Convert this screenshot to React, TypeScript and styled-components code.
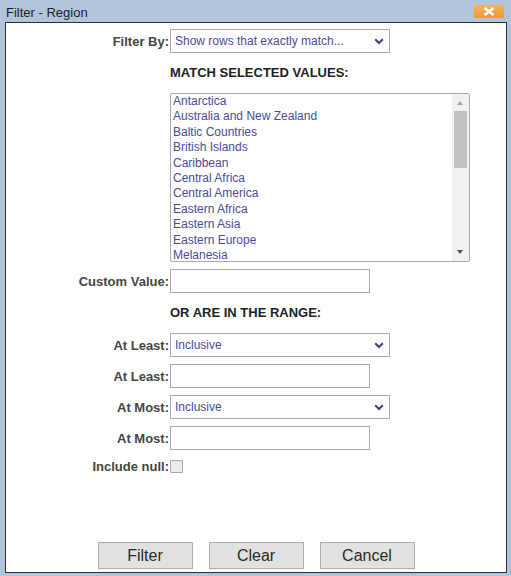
import { createGlobalStyle } from "styled-components";
import styled from "styled-components";

const GlobalStyle = createGlobalStyle`
  html, body {
    margin: 0;
    padding: 0;
    background: #b2c4da;
  }
  body {
    font-family: "Liberation Sans", Arial, sans-serif;
  }
`;

const Window = styled.div`
  display: flex;
  flex-direction: column;
  width: 511px;
  height: 576px;
  box-sizing: border-box;
  padding: 0 4px 3px 5px;
  background: #b2c4da;
`;

const TitleBar = styled.div`
  display: flex;
  align-items: center;
  justify-content: space-between;
  height: 22px;
  box-sizing: border-box;
  padding: 3px 3px 0 1px;
`;

const Title = styled.span`
  font-size: 13px;
  color: #1e1e1e;
`;

const CloseButton = styled.button`
  display: flex;
  align-items: center;
  justify-content: center;
  width: 30px;
  height: 13px;
  padding: 0;
  margin-top: -3px;
  border: none;
  background: linear-gradient(#f7b257, #f09a2c);
`;

const Panel = styled.div`
  flex: 1;
  display: flex;
  flex-direction: column;
  background: #fff;
  border: 1px solid #27313d;
`;

const Form = styled.div`
  display: grid;
  grid-template-columns: 163px auto;
  column-gap: 1px;
  row-gap: 7px;
  padding-top: 6px;
  align-items: center;
  justify-items: start;
`;

const Label = styled.label`
  justify-self: end;
  font-size: 13px;
  font-weight: bold;
  color: #454545;
`;

const Heading = styled.div`
  grid-column: 2;
  height: 26px;
  display: flex;
  align-items: center;
  padding-bottom: 2px;
  box-sizing: border-box;
  font-size: 13px;
  font-weight: bold;
  color: #222;
`;

const SelectWrap = styled.div`
  position: relative;
  width: 220px;
  height: 24px;

  svg {
    position: absolute;
    right: 6px;
    top: 9px;
    pointer-events: none;
  }
`;

const Select = styled.select`
  appearance: none;
  width: 100%;
  height: 100%;
  box-sizing: border-box;
  margin: 0;
  padding: 0 20px 0 4px;
  border: 1px solid #a9a9a9;
  border-radius: 0;
  background: #fff;
  font-family: "Liberation Sans", Arial, sans-serif;
  font-size: 12px;
  color: #4a4a9e;
  outline: none;
`;

const TextInput = styled.input`
  width: 200px;
  height: 24px;
  box-sizing: border-box;
  margin: 0;
  padding: 0 4px;
  border: 1px solid #a9a9a9;
  border-radius: 0;
  font-family: "Liberation Sans", Arial, sans-serif;
  font-size: 12px;
`;

const ListBox = styled.div`
  grid-column: 2;
  display: flex;
  width: 300px;
  height: 169px;
  box-sizing: border-box;
  border: 1px solid #a9a9a9;
  border-radius: 2px;
  overflow: hidden;
`;

const Items = styled.div`
  flex: 1;
  padding-left: 2px;
  overflow: hidden;
`;

const Item = styled.div`
  font-size: 12px;
  line-height: 15.4px;
  color: #4a4a9e;
  white-space: nowrap;
`;

const ScrollTrack = styled.div`
  position: relative;
  width: 17px;
  background: #f1f1f1;
`;

const Thumb = styled.div`
  position: absolute;
  left: 2px;
  right: 2px;
  top: 17px;
  height: 57px;
  background: #c1c1c1;
`;

const Arrow = styled.div<{ $down?: boolean }>`
  position: absolute;
  left: 5px;
  width: 0;
  height: 0;
  border-left: 3.5px solid transparent;
  border-right: 3.5px solid transparent;
  ${({ $down }) =>
    $down
      ? "bottom: 7px; border-top: 4px solid #505050;"
      : "top: 7px; border-bottom: 4px solid #a3a3a3;"}
`;

const CheckRow = styled.div`
  height: 18px;
  display: flex;
  align-items: center;
`;

const Checkbox = styled.input`
  appearance: none;
  width: 13px;
  height: 13px;
  margin: 0;
  border: 1px solid #a7a7a7;
  border-radius: 1px;
  background: #ececec;
`;

const Footer = styled.div`
  margin-top: auto;
  display: flex;
  justify-content: center;
  gap: 16px;
  padding-bottom: 3px;
`;

const Button = styled.button`
  width: 95px;
  height: 27px;
  box-sizing: border-box;
  border: 1px solid #adadad;
  border-radius: 0;
  background: #e1e1e1;
  font-family: "Liberation Sans", Arial, sans-serif;
  font-size: 16px;
  color: #2a2a2a;
`;

const regions = [
  "Antarctica",
  "Australia and New Zealand",
  "Baltic Countries",
  "British Islands",
  "Caribbean",
  "Central Africa",
  "Central America",
  "Eastern Africa",
  "Eastern Asia",
  "Eastern Europe",
  "Melanesia",
];

const Chevron = () => (
  <svg width="10" height="7" viewBox="0 0 10 7">
    <path d="M1.2 1.2 L5 5 L8.8 1.2" fill="none" stroke="#3c3c8c" strokeWidth="2" />
  </svg>
);

const CloseIcon = () => (
  <svg width="12" height="9" viewBox="0 0 12 9">
    <path d="M1.5 1 L10.5 8 M10.5 1 L1.5 8" stroke="#fff" strokeWidth="2.6" />
  </svg>
);

const Dropdown = ({ value }: { value: string }) => (
  <SelectWrap>
    <Select defaultValue={value}>
      <option>{value}</option>
    </Select>
    <Chevron />
  </SelectWrap>
);

export default function App() {
  return (
    <>
      <GlobalStyle />
      <Window>
        <TitleBar>
          <Title>Filter - Region</Title>
          <CloseButton aria-label="Close">
            <CloseIcon />
          </CloseButton>
        </TitleBar>
        <Panel>
          <Form>
            <Label>Filter By:</Label>
            <Dropdown value="Show rows that exactly match..." />

            <Heading>MATCH SELECTED VALUES:</Heading>

            <ListBox>
              <Items>
                {regions.map((r) => (
                  <Item key={r}>{r}</Item>
                ))}
              </Items>
              <ScrollTrack>
                <Arrow />
                <Thumb />
                <Arrow $down />
              </ScrollTrack>
            </ListBox>

            <Label>Custom Value:</Label>
            <TextInput type="text" />

            <Heading>OR ARE IN THE RANGE:</Heading>

            <Label>At Least:</Label>
            <Dropdown value="Inclusive" />

            <Label>At Least:</Label>
            <TextInput type="text" />

            <Label>At Most:</Label>
            <Dropdown value="Inclusive" />

            <Label>At Most:</Label>
            <TextInput type="text" />

            <Label>Include null:</Label>
            <CheckRow>
              <Checkbox type="checkbox" />
            </CheckRow>
          </Form>
          <Footer>
            <Button>Filter</Button>
            <Button>Clear</Button>
            <Button>Cancel</Button>
          </Footer>
        </Panel>
      </Window>
    </>
  );
}
